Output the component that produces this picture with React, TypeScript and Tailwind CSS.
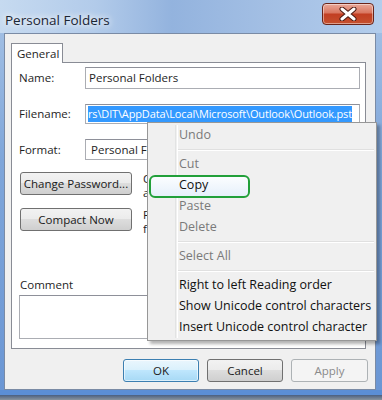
const font = "font-['Open_Sans',sans-serif]";

function WinButton({ label, kind = "normal", className = "" }: { label: string; kind?: "normal" | "default" | "disabled"; className?: string }) {
  const styles = {
    normal: "border-[#707070] bg-[linear-gradient(#f2f2f2_0%,#ebebeb_49%,#dddddd_50%,#cfcfcf_100%)] text-[#1a1a1a]",
    default: "border-[#3c7fb1] bg-[linear-gradient(#eaf6fd_0%,#d9f0fc_49%,#bee6fd_50%,#a7d9f5_100%)] text-[#1a1a1a] shadow-[inset_0_0_0_1px_rgba(255,255,255,0.6)]",
    disabled: "border-[#adb2b5] bg-[#f4f4f4] text-[#8a8a8a]",
  };
  return (
    <div className={`h-[23px] shrink-0 rounded-[3px] border flex items-center justify-center text-[11.5px] ${styles[kind]} ${className}`}>
      {label}
    </div>
  );
}

function Field({ label, children, h = "h-[22px]", mt }: { label: string; children: React.ReactNode; h?: string; mt: string }) {
  return (
    <div className={`flex items-center ${mt}`}>
      <span className="w-[66px] text-[11.5px] text-[#1e1e1e]">{label}</span>
      <div className={`w-[275px] ${h} border border-[#abadb3] border-t-[#8e9099] bg-white flex items-center px-[2px] overflow-hidden whitespace-nowrap text-[11.5px]`}>
        {children}
      </div>
    </div>
  );
}

const menuItems: ({ t: string; on: boolean } | null)[] = [
  { t: "Undo", on: false },
  null,
  { t: "Cut", on: false },
  { t: "Copy", on: true },
  { t: "Paste", on: false },
  { t: "Delete", on: false },
  null,
  { t: "Select All", on: false },
  null,
  { t: "Right to left Reading order", on: true },
  { t: "Show Unicode control characters", on: true },
  { t: "Insert Unicode control character", on: true },
];

function ContextMenu() {
  return (
    <div className="absolute left-[147px] top-[122px] w-[230px] border border-[#979797] bg-[#f0f0f0] py-[2px] shadow-[3px_3px_3px_rgba(0,0,0,0.3)]">
      {/* icon gutter */}
      <div className="absolute left-[27px] top-[2px] bottom-[2px] w-[2px] border-l border-[#e2e3e3] shadow-[1px_0_0_#ffffff]" />
      {menuItems.map((it, i) => {
        if (!it) {
          return (
            <div key={i} className="h-[8px] flex items-center pl-[29px] pr-[2px]">
              <div className="h-[2px] w-full border-t border-[#e0e0e0] border-b border-b-white" />
            </div>
          );
        }
        return (
          <div key={i} className="relative h-[21px] flex items-center pl-[31px]">
            {it.t === "Copy" && (
              <div className="absolute left-[1px] top-[0px] w-[101px] h-[23px] rounded-[6px] border-2 border-[#22a03a] bg-[linear-gradient(#fbfdff,#e6f0fb)]" />
            )}
            <span className={`relative text-[12.5px] ${it.on ? "text-[#111]" : "text-[#7a7a7a]"}`}>{it.t}</span>
          </div>
        );
      })}
    </div>
  );
}

export default function App() {
  return (
    <div className={`relative w-[382px] h-[400px] overflow-hidden ${font} bg-[linear-gradient(180deg,#a8c4e6_0%,#7fa6da_40%,#6a96d4_100%)]`}>
      {/* Title bar */}
      <div className="h-[33px] flex items-start justify-between bg-[linear-gradient(90deg,#c6daf0_0%,#b2cbea_25%,#93b3de_45%,#a3bfe4_70%,#b3cdec_100%)]">
        <span className="mt-[10px] ml-[5px] text-[13.5px] text-[#1b2533] [text-shadow:0_0_6px_#fff,0_0_10px_#fff]">Personal Folders</span>
        <div className="mt-[3px] mr-[8px] w-[52px] h-[22px] rounded-[4px] border border-[#6a2419] bg-[linear-gradient(#e9a899_0%,#d9765f_45%,#c23e22_50%,#c5502e_100%)] shadow-[inset_0_0_0_1px_rgba(255,255,255,0.45)] flex items-center justify-center">
          <svg width="18" height="14" viewBox="0 0 18 14">
            <path d="M3 2 L15 12 M15 2 L3 12" stroke="#4a1a12" strokeWidth="5" strokeLinecap="round" />
            <path d="M3 2 L15 12 M15 2 L3 12" stroke="#ffffff" strokeWidth="3" strokeLinecap="round" />
          </svg>
        </div>
      </div>

      {/* Client area */}
      <div className="ml-[4px] w-[372px] h-[357px] bg-[#f0f0f0] border border-[#7a8ba5] pt-[9px] pl-[6px] flex flex-col">
        {/* Tab */}
        <div className="w-[52px] h-[20px] border border-b-0 border-[#898c95] bg-white flex items-center pl-[5px] text-[11.5px] text-[#1e1e1e] relative z-10 -mb-px">
          General
        </div>
        <div className="w-[355px] h-[287px] border border-[#898c95] bg-white pl-[7px] flex flex-col">
          <Field label="Name:" mt="mt-[4px]">
            <span className="pl-[1px] text-[#1e1e1e]">Personal Folders</span>
          </Field>
          <Field label="Filename:" mt="mt-[15px]" h="h-[20px]">
            <div className="w-[270px] overflow-hidden">
              <span className="inline-block bg-[#3399ff] text-white text-[11px] tracking-[-0.15px] leading-[16px] whitespace-nowrap">rs\DIT\AppData\Local\Microsoft\Outlook\Outlook.pst</span>
            </div>
          </Field>
          <Field label="Format:" mt="mt-[15px]" h="h-[21px]">
            <span className="pl-[3px] text-[#1e1e1e]">Personal Folders File (.pst)</span>
          </Field>
          <div className="mt-[12px] h-[23px] flex items-start gap-[11px]">
            <WinButton label="Change Password..." className="ml-[1px] w-[112px]" />
            <p className="w-[4px] overflow-hidden text-[11.5px] leading-[14px] text-[#1e1e1e] whitespace-nowrap">Changes the password used to<br />access the personal folder file</p>
          </div>
          <div className="mt-[13px] h-[23px] flex items-start gap-[11px]">
            <WinButton label="Compact Now" className="ml-[1px] w-[112px]" />
            <p className="w-[4px] overflow-hidden text-[11.5px] leading-[14px] text-[#1e1e1e] whitespace-nowrap">Frees disk space used by the<br />file</p>
          </div>
          <span className="mt-[47px] text-[11.5px] leading-[14px] text-[#1e1e1e] ml-[1px]">Comment</span>
          <div className="mt-[3px] w-[339px] h-[44px] border border-[#abadb3] border-t-[#8e9099] bg-white" />
        </div>
        <div className="mt-[10px] flex gap-[8px] pl-[112px]">
          <WinButton label="OK" kind="default" className="w-[76px]" />
          <WinButton label="Cancel" className="w-[76px]" />
          <WinButton label="Apply" kind="disabled" className="w-[77px]" />
        </div>
      </div>
      <div className="h-[5px] bg-[#5b8ed6]" />
      <div className="h-[5px] bg-[linear-gradient(#4a5f80,#8a949f)]" />

      <ContextMenu />
    </div>
  );
}
